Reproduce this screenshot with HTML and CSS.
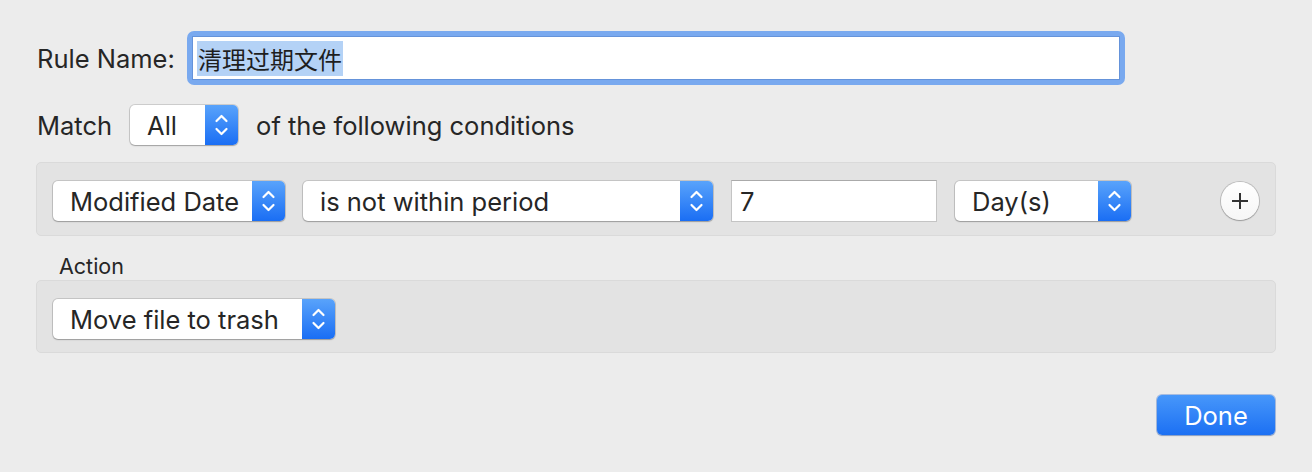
FILE: index.html
```html
<!DOCTYPE html>
<html lang="zh-CN">
<head>
<meta charset="utf-8">
<title>Rule</title>
<link rel="stylesheet" href="styles.css">
</head>
<body>
<div class="sheet">
  <div class="name-row">
    <span class="label">Rule Name:</span>
    <div class="name-field">
      <div class="name-inner"><span class="sel">清理过期文件</span></div>
    </div>
  </div>

  <div class="match-row">
    <span class="label">Match</span>
    <div class="popup w-all">
      <span class="popup-text">All</span>
      <span class="popup-arrow"><svg viewBox="0 0 33 40" width="33" height="40"><polyline points="11.5,16 16.5,11 21.5,16" /><polyline points="11.5,24 16.5,29 21.5,24" /></svg></span>
    </div>
    <span class="label">of the following conditions</span>
  </div>

  <div class="box conditions">
    <div class="popup w-field">
      <span class="popup-text">Modified Date</span>
      <span class="popup-arrow"><svg viewBox="0 0 33 40" width="33" height="40"><polyline points="11.5,16 16.5,11 21.5,16" /><polyline points="11.5,24 16.5,29 21.5,24" /></svg></span>
    </div>
    <div class="popup w-op">
      <span class="popup-text">is not within period</span>
      <span class="popup-arrow"><svg viewBox="0 0 33 40" width="33" height="40"><polyline points="11.5,16 16.5,11 21.5,16" /><polyline points="11.5,24 16.5,29 21.5,24" /></svg></span>
    </div>
    <div class="textfield">7</div>
    <div class="popup w-unit">
      <span class="popup-text">Day(s)</span>
      <span class="popup-arrow"><svg viewBox="0 0 33 40" width="33" height="40"><polyline points="11.5,16 16.5,11 21.5,16" /><polyline points="11.5,24 16.5,29 21.5,24" /></svg></span>
    </div>
    <div class="spacer"></div>
    <div class="plus"><svg viewBox="0 0 38 38" width="38" height="38"><line x1="11" y1="19" x2="27" y2="19" /><line x1="19" y1="11" x2="19" y2="27" /></svg></div>
  </div>

  <div class="action-label">Action</div>
  <div class="box action">
    <div class="popup w-action">
      <span class="popup-text">Move file to trash</span>
      <span class="popup-arrow"><svg viewBox="0 0 33 40" width="33" height="40"><polyline points="11.5,16 16.5,11 21.5,16" /><polyline points="11.5,24 16.5,29 21.5,24" /></svg></span>
    </div>
  </div>

  <div class="footer">
    <div class="done">Done</div>
  </div>
</div>
</body>
</html>
```

FILE: styles.css
```css
html, body {
  margin: 0;
  padding: 0;
}
body {
  background: #ececec;
  font-family: Inter, "Noto Sans", "Noto Sans CJK SC", sans-serif;
  font-size: 25.5px;
  color: #262626;
  width: 1312px;
  height: 472px;
  overflow: hidden;
}
.sheet {
  padding: 31px 36px 0 36px;
}
.label {
  white-space: nowrap;
}
.name-row {
  display: flex;
  align-items: center;
  height: 54px;
  padding-left: 1px;
}
.name-row .label {
  width: 150px;
}
.name-field {
  width: 938px;
  height: 54px;
  box-sizing: border-box;
  border-radius: 7px;
  background: #79a9ef;
  padding: 5px;
}
.name-inner {
  height: 44px;
  box-sizing: border-box;
  background: #fff;
  border: 1px solid #6593da;
  display: flex;
  align-items: center;
  padding-left: 4px;
}
.sel {
  background: #b4d2f6;
  font-family: "Noto Sans CJK SC", sans-serif;
  font-size: 24px;
  line-height: 35px;
  padding: 0 1px;
  color: #1e1e1e;
}
.match-row {
  display: flex;
  align-items: center;
  height: 40px;
  margin-top: 20px;
  padding-left: 1px;
}
.match-row .popup {
  margin-left: 18px;
  margin-right: 18px;
}
.popup {
  display: flex;
  height: 40px;
  box-sizing: border-box;
  border-radius: 5px;
  background: #fff;
  box-shadow: 0 0 0 1px rgba(0, 0, 0, 0.13), 0 1px 1.5px rgba(0, 0, 0, 0.22);
  overflow: hidden;
  flex: none;
}
.popup-text {
  flex: 1;
  padding-left: 17px;
  line-height: 41px;
  white-space: nowrap;
}
.popup-arrow {
  width: 33px;
  height: 40px;
  background: linear-gradient(#59a3fb, #1a6ef4);
  flex: none;
}
.popup-arrow svg {
  display: block;
}
.popup-arrow polyline {
  fill: none;
  stroke: #fff;
  stroke-width: 2.2;
  stroke-linecap: round;
  stroke-linejoin: round;
}
.w-all { width: 108px; }
.w-field { width: 232px; }
.w-op { width: 410px; }
.w-unit { width: 176px; }
.w-action { width: 282px; }
.box {
  box-sizing: border-box;
  background: #e3e3e3;
  border: 1px solid #dadada;
  border-radius: 5px;
  display: flex;
  align-items: center;
  padding: 4px 16px 0 16px;
  gap: 18px;
}
.conditions {
  margin-top: 17px;
  height: 74px;
}
.textfield {
  width: 206px;
  height: 42px;
  box-sizing: border-box;
  background: #fff;
  border: 1px solid #c4c4c4;
  border-top-color: #aaaaaa;
  line-height: 41px;
  padding-left: 8px;
  flex: none;
}
.spacer {
  flex: 1;
}
.plus {
  width: 38px;
  height: 38px;
  box-sizing: border-box;
  border-radius: 50%;
  background: linear-gradient(#ffffff, #f6f6f6);
  box-shadow: 0 0 0 1px rgba(0, 0, 0, 0.16), 0 1px 1.5px rgba(0, 0, 0, 0.2);
  flex: none;
}
.plus svg {
  display: block;
}
.plus line {
  stroke: #333;
  stroke-width: 2;
}
.action-label {
  margin-top: 18px;
  line-height: 24px;
  font-size: 21.5px;
  padding-left: 23px;
}
.action {
  margin-top: 2px;
  height: 73px;
}
.footer {
  display: flex;
  justify-content: flex-end;
  margin-top: 42px;
  padding-right: 1px;
}
.done {
  width: 118px;
  height: 40px;
  border-radius: 5px;
  background: linear-gradient(#4797fa, #1c70f3);
  box-shadow: 0 0 0 1px rgba(10, 80, 200, 0.3), 0 1px 1.5px rgba(0, 0, 0, 0.2);
  color: #fff;
  text-align: center;
  line-height: 41px;
}
```
